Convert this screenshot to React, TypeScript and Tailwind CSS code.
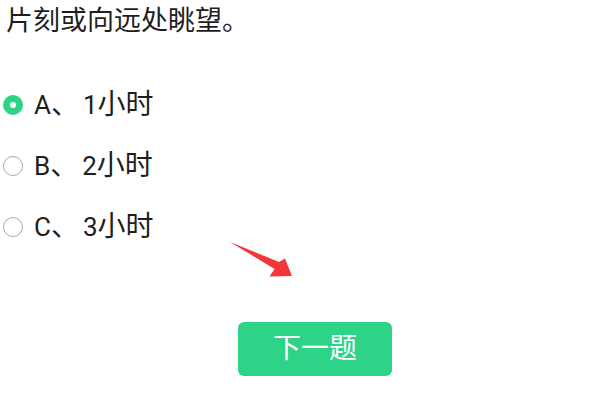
import React from "react";

type Part = { text: string; cls: string };

const labelParts = (letter: string, hours: string): Part[] => [
  { text: letter, cls: "text-[26px]" },
  { text: "、", cls: "mr-[4px] text-[28px]" },
  { text: hours, cls: "text-[26px]" },
  { text: "小时", cls: "text-[28px]" },
];

const options = [
  { key: "A", checked: true, parts: labelParts("A", "1") },
  { key: "B", checked: false, parts: labelParts("B", "2") },
  { key: "C", checked: false, parts: labelParts("C", "3") },
];

function Radio({ checked }: { checked: boolean }) {
  if (checked) {
    return (
      <span className="flex h-[20px] w-[20px] shrink-0 items-center justify-center rounded-full bg-[#2dd387]">
        <span className="h-[6px] w-[6px] rounded-full bg-white" />
      </span>
    );
  }
  return <span className="h-[20px] w-[20px] shrink-0 rounded-full border-[1.5px] border-[#a8a8a8] bg-white" />;
}

export default function App() {
  return (
    <div
      className="relative h-[402px] w-[601px] overflow-hidden bg-white text-[#1e1e1e]"
      style={{ fontFamily: 'Roboto, "Noto Sans CJK SC", sans-serif' }}
    >
      <div className="h-[42px] pl-[6px] text-[27px] leading-[42px]">片刻或向远处眺望。</div>

      <div className="mt-[32px] flex flex-col">
        {options.map((o) => (
          <div key={o.key} className="flex h-[61px] items-center gap-[11px] pl-[3px]">
            <Radio checked={o.checked} />
            <span className="flex items-baseline leading-none">
              {o.parts.map((p, i) => (
                <span key={i} className={p.cls}>
                  {p.text}
                </span>
              ))}
            </span>
          </div>
        ))}
      </div>

      <div className="ml-[238px] mt-[65px] flex h-[54px] w-[154px] items-center justify-center rounded-[6px] bg-[#2dd387] text-[28px] text-white">
        下一题
      </div>

      {/* red pointer arrow */}
      <svg className="pointer-events-none absolute left-0 top-0" width="601" height="402">
        <polygon points="230,242 279,262 285,258.5 292,276 269.5,276.5 274.5,269" fill="#f2363a" />
      </svg>
    </div>
  );
}
